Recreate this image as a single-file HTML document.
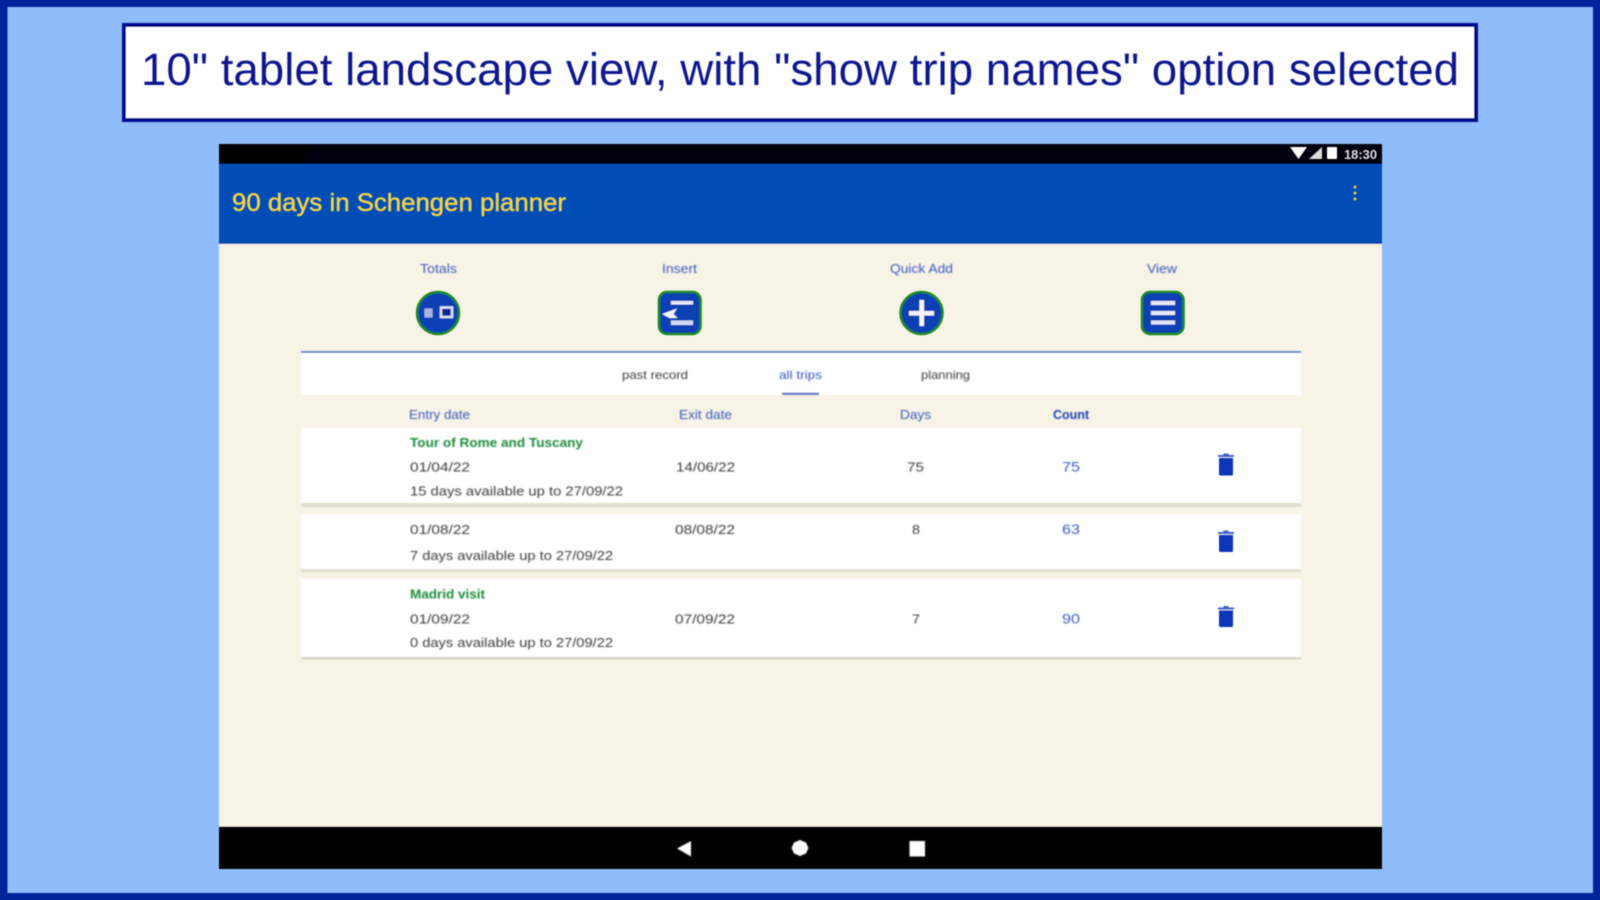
<!DOCTYPE html>
<html lang="en">
<head>
<meta charset="utf-8">
<title>90 days in Schengen planner</title>
<style>
html,body{margin:0;padding:0;width:1600px;height:900px;overflow:hidden;background:#8fbcfb}
svg{display:block;position:absolute;left:0;top:0}
text{font-family:"Liberation Sans",sans-serif}
.b{filter:url(#b1)}
.s{filter:url(#b2)}
.t{filter:url(#b3)}
.m{filter:url(#b4)}
.lab{font-size:12.5px;fill:#3a58bd}
.tx{font-size:13px;fill:#3a3a3a}
.nm{font-size:13px;font-weight:bold;fill:#1f8a3a}
.cnt{font-size:13.5px;fill:#3a58c4}
</style>
</head>
<body>
<svg width="1600" height="900" viewBox="0 0 1600 900" xmlns="http://www.w3.org/2000/svg">
<defs>
<filter id="b1" x="-5%" y="-5%" width="110%" height="110%"><feGaussianBlur stdDeviation="0.6"/></filter>
<filter id="b2" x="-5%" y="-5%" width="110%" height="110%"><feGaussianBlur stdDeviation="0.45"/></filter>
<filter id="b3" filterUnits="userSpaceOnUse" x="0" y="0" width="1600" height="900"><feGaussianBlur stdDeviation="0.6"/></filter>
<filter id="b4" filterUnits="userSpaceOnUse" x="0" y="0" width="1600" height="900"><feGaussianBlur stdDeviation="0.9"/></filter>
</defs>

<!-- page frame -->
<rect width="1600" height="900" fill="#00239c"/>
<rect x="7.500" y="7" width="1585.500" height="886" fill="#8fbcfb" class="b"/>

<!-- caption box -->
<rect x="124" y="25" width="1352" height="95" fill="#fff" stroke="#050a8e" stroke-width="4" class="b"/>
<text x="141" y="85" font-size="45" fill="#10168f" textLength="1318" lengthAdjust="spacingAndGlyphs" class="t">10" tablet landscape view, with "show trip names" option selected</text>

<!-- app window -->
<g class="s">
<rect x="219" y="144" width="1163" height="20" fill="#00000f"/>
<rect x="219" y="144" width="87" height="20" fill="#000"/>
<rect x="219" y="164" width="1163" height="80" fill="#034db6"/>
<rect x="219" y="244" width="1163" height="583" fill="#f7f3e7"/>
<rect x="219" y="826.500" width="1163" height="42.500" fill="#000"/>
</g>

<!-- status icons -->
<g class="t" fill="#fff">
<path d="M1290 147h17l-8.500 12z"/>
<path d="M1309 159l13-12v12z" fill="#ddd"/>
<rect x="1327" y="147" width="10" height="12" rx="1"/>
<text x="1344" y="159" font-size="13" font-weight="bold" textLength="33" lengthAdjust="spacingAndGlyphs" fill="#e0e0e0">18:30</text>
</g>

<!-- title -->
<text x="232" y="211" font-size="25" fill="#f4d247" stroke="#f4d247" stroke-width="0.5" textLength="334" lengthAdjust="spacingAndGlyphs" class="t">90 days in Schengen planner</text>
<g fill="#f0d030" class="t">
<circle cx="1355" cy="187" r="1.500"/><circle cx="1355" cy="193" r="1.500"/><circle cx="1355" cy="199" r="1.500"/>
</g>

<!-- toolbar labels -->
<g class="m">
<text class="lab" x="420" y="273" textLength="37" lengthAdjust="spacingAndGlyphs">Totals</text>
<text class="lab" x="662" y="273" textLength="35" lengthAdjust="spacingAndGlyphs">Insert</text>
<text class="lab" x="890" y="273" textLength="63" lengthAdjust="spacingAndGlyphs">Quick Add</text>
<text class="lab" x="1147" y="273" textLength="30" lengthAdjust="spacingAndGlyphs">View</text>
</g>

<!-- toolbar icons -->
<g class="t">
<circle cx="438" cy="313" r="21" fill="#0a3fb4" stroke="#1a8a1f" stroke-width="2.500"/>
<rect x="424.500" y="308.500" width="8" height="9" fill="#a8b4e0"/>
<rect x="441" y="307.500" width="11" height="9.500" fill="#00289a" stroke="#dfe4f6" stroke-width="2.500"/>

<rect x="659" y="292" width="41.500" height="42" rx="8" fill="#0a3fb4" stroke="#1a8a1f" stroke-width="2.500"/>
<rect x="671" y="301" width="22" height="3.500" fill="#e6eaf8"/>
<rect x="671" y="320.500" width="22" height="4.500" fill="#cfd7f2"/>
<path d="M662 314l15-5.500-3.500 5.500 4 4-8 0z" fill="#f2f4fc"/>

<circle cx="921.500" cy="313" r="21" fill="#0a3fb4" stroke="#1a8a1f" stroke-width="2.500"/>
<rect x="909" y="311" width="25" height="4.500" fill="#eef1fb"/>
<rect x="919.500" y="300" width="4.500" height="26" fill="#f7f8fe"/>

<rect x="1142" y="292" width="41.500" height="42" rx="8" fill="#0a3fb4" stroke="#1a8a1f" stroke-width="2.500"/>
<rect x="1151" y="301" width="24" height="4" fill="#e6eaf8"/>
<rect x="1151" y="311" width="24" height="4" fill="#e6eaf8"/>
<rect x="1151" y="320.500" width="24" height="4" fill="#dfe4f6"/>
</g>

<!-- tab strip -->
<g class="s">
<rect x="301" y="353" width="1000" height="42" fill="#fff"/>
<rect x="301" y="351" width="1000" height="2" fill="#6d8acd"/>
<rect x="782" y="392.500" width="37" height="2.500" fill="#6f86d0"/>
</g>
<g class="m">
<text class="tx" style="font-size:12px" x="622" y="379" textLength="66" lengthAdjust="spacingAndGlyphs">past record</text>
<text class="lab" style="font-size:12px" x="779" y="379" textLength="43" lengthAdjust="spacingAndGlyphs">all trips</text>
<text class="tx" style="font-size:12px" x="921" y="379" textLength="49" lengthAdjust="spacingAndGlyphs">planning</text>

<text class="lab" style="font-size:13px" x="409" y="419" textLength="61" lengthAdjust="spacingAndGlyphs">Entry date</text>
<text class="lab" style="font-size:13px" x="679" y="419" textLength="53" lengthAdjust="spacingAndGlyphs">Exit date</text>
<text class="lab" style="font-size:13px" x="900" y="419" textLength="31" lengthAdjust="spacingAndGlyphs">Days</text>
<text class="lab" style="font-size:13px;font-weight:bold;fill:#1f3fb0" x="1053" y="419" textLength="36" lengthAdjust="spacingAndGlyphs">Count</text>
</g>

<!-- rows -->
<g class="s">
<rect x="301" y="503" width="1000" height="4" fill="#e2decf"/>
<rect x="301" y="428" width="1000" height="75" fill="#fff"/>
<rect x="301" y="569" width="1000" height="3.500" fill="#e2decf"/>
<rect x="301" y="514" width="1000" height="55" fill="#fff"/>
<rect x="301" y="657" width="1000" height="2.500" fill="#d8d4c6"/>
<rect x="301" y="579" width="1000" height="78" fill="#fff"/>
</g>

<g class="m">
<text class="nm" x="410" y="447" textLength="173" lengthAdjust="spacingAndGlyphs">Tour of Rome and Tuscany</text>
<text class="tx" x="410" y="471.500" textLength="60" lengthAdjust="spacingAndGlyphs">01/04/22</text>
<text class="tx" x="676" y="471.500" textLength="59" lengthAdjust="spacingAndGlyphs">14/06/22</text>
<text class="tx" x="907" y="471.500" textLength="17" lengthAdjust="spacingAndGlyphs">75</text>
<text class="cnt" x="1062" y="471.500" textLength="18" lengthAdjust="spacingAndGlyphs">75</text>
<text class="tx" x="410" y="495.500" textLength="213" lengthAdjust="spacingAndGlyphs">15 days available up to 27/09/22</text>

<text class="tx" x="410" y="534" textLength="60" lengthAdjust="spacingAndGlyphs">01/08/22</text>
<text class="tx" x="675" y="534" textLength="60" lengthAdjust="spacingAndGlyphs">08/08/22</text>
<text class="tx" x="912" y="534" textLength="8" lengthAdjust="spacingAndGlyphs">8</text>
<text class="cnt" x="1062" y="534" textLength="18" lengthAdjust="spacingAndGlyphs">63</text>
<text class="tx" x="410" y="560" textLength="203" lengthAdjust="spacingAndGlyphs">7 days available up to 27/09/22</text>

<text class="nm" x="410" y="598.500" textLength="75" lengthAdjust="spacingAndGlyphs">Madrid visit</text>
<text class="tx" x="410" y="623.500" textLength="60" lengthAdjust="spacingAndGlyphs">01/09/22</text>
<text class="tx" x="675" y="623.500" textLength="60" lengthAdjust="spacingAndGlyphs">07/09/22</text>
<text class="tx" x="912" y="623.500" textLength="8" lengthAdjust="spacingAndGlyphs">7</text>
<text class="cnt" x="1062" y="623.500" textLength="18" lengthAdjust="spacingAndGlyphs">90</text>
<text class="tx" x="410" y="647" textLength="203" lengthAdjust="spacingAndGlyphs">0 days available up to 27/09/22</text>
</g>

<!-- trash icons -->
<g fill="#0b35b8" class="t">
<path d="M1219 458h14v16a1.500 1.500 0 0 1-1.500 1.500h-11a1.500 1.500 0 0 1-1.500-1.500z"/>
<path d="M1218 457v-2h5l1-1.500h4l1 1.500h5v2z" fill="#3f5fc8"/>
<path d="M1219 535h14v15.500a1.500 1.500 0 0 1-1.500 1.500h-11a1.500 1.500 0 0 1-1.500-1.500z"/>
<path d="M1218 534v-2h5l1-1.500h4l1 1.500h5v2z" fill="#3f5fc8"/>
<path d="M1219 610.500h14v15a1.500 1.500 0 0 1-1.500 1.500h-11a1.500 1.500 0 0 1-1.500-1.500z"/>
<path d="M1218 609.500v-2h5l1-1.500h4l1 1.500h5v2z" fill="#3f5fc8"/>
</g>

<!-- navigation -->
<g fill="#fff" class="m">
<path d="M677 848.500l14-7.500v15.500z"/>
<path d="M800 840l6 2.500 2.500 5.500-2.500 5.500-6 2.500-6-2.500-2.500-5.500 2.500-5.500z"/>
<rect x="909.500" y="841" width="15.500" height="15.500"/>
</g>
</svg>
</body>
</html>
